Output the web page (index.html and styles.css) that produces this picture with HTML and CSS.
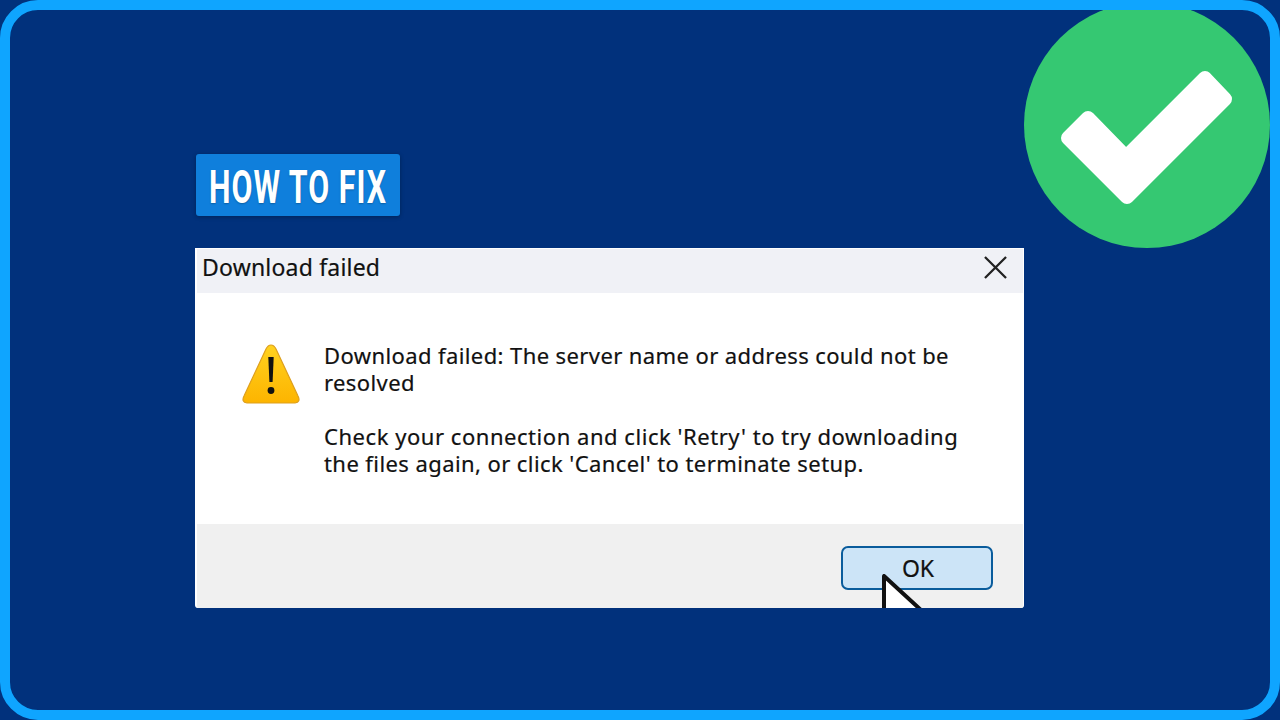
FILE: index.html
```html
<!DOCTYPE html>
<html lang="en">
<head>
  <meta charset="UTF-8" />
  <title>How to fix - Download failed</title>
  <link rel="stylesheet" href="styles.css">
</head>
<body>

  <div class="frame">
    <svg class="check" viewBox="1024 2 246 246" width="246" height="246">
      <circle cx="1147" cy="125" r="123" fill="#35c872" />
      <polygon points="1068,138 1088,118 1126,157 1205,78 1225,99 1127,197" fill="#fff" stroke="#fff" stroke-width="14" stroke-linejoin="round" />
    </svg>

    <div class="badge"><span class="badge-text">HOW TO FIX</span></div>

    <div class="dialog">
      <div class="titlebar">
        <span class="title">Download failed</span>
        <svg class="close" viewBox="0 0 24 24" width="24" height="24">
          <path d="M1 1 L23 23 M23 1 L1 23" stroke="#222" stroke-width="2.4" fill="none" />
        </svg>
      </div>

      <div class="content">
        <svg class="warn" viewBox="0 0 60 60" width="60" height="60">
          <defs>
            <linearGradient id="warnFill" x1="0" y1="0" x2="0" y2="1">
              <stop offset="0" stop-color="#ffd21f" />
              <stop offset="1" stop-color="#fdb400" />
            </linearGradient>
          </defs>
          <path d="M30 1 Q27 1 25 5 L3 52 Q0 58 6 59 L54 59 Q60 58 57 52 L35 5 Q33 1 30 1 Z" fill="url(#warnFill)" stroke="#dd9f1e" stroke-width="1.2" />
          <path d="M27.3 13 L32.7 13 L31.6 38 L28.4 38 Z" fill="#111" />
          <circle cx="30" cy="46.5" r="3.4" fill="#111" />
        </svg>
        <div class="message">
          <p>Download failed: The server name or address could not be<br>resolved</p>
          <p class="retry">Check your connection and click 'Retry' to try downloading<br><span class="retry-end">the files again, or click 'Cancel' to terminate setup.</span></p>
        </div>
      </div>

      <div class="footer">
        <button class="ok">OK</button>
      </div>

      <svg class="cursor" viewBox="0 0 60 60" width="60" height="60">
        <path d="M2 2 L2 58 L14 48 L52 48 Z" fill="#fff" stroke="#111" stroke-width="4" stroke-linejoin="round" />
      </svg>
    </div>
  </div>

</body>
</html>
```

FILE: styles.css
```css
* {
  box-sizing: border-box;
}

html, body {
  margin: 0;
  height: 100%;
  background: #01317c;
}

.frame {
  position: relative;
  width: 1280px;
  height: 720px;
  border: 10px solid #0fa5ff;
  border-radius: 38px;
  overflow: hidden;
  padding: 144px 0 0 185px;
  background: #01317c;
}

.check {
  position: absolute;
  left: 1014px;
  top: -8px;
}

.badge {
  display: flex;
  align-items: center;
  justify-content: center;
  width: 204px;
  height: 62px;
  margin-left: 1px;
  padding-top: 4px;
  background: #0f7fdc;
  border-radius: 3px;
  box-shadow: 0 1px 4px rgba(0, 0, 0, 0.3);
}

.badge-text {
  flex: none;
  color: #fff;
  font-family: Roboto, sans-serif;
  font-weight: bold;
  font-size: 46px;
  line-height: 58px;
  letter-spacing: 1.6px;
  white-space: nowrap;
  transform: scaleX(0.66);
  text-shadow: 0 1px 2px rgba(0, 0, 0, 0.25);
}

.dialog {
  position: relative;
  width: 829px;
  height: 360px;
  margin-top: 32px;
  display: flex;
  flex-direction: column;
  background: #fff;
  border-top: 1px solid #fff;
  border-left: 2px solid #fff;
  border-right: 1px solid #fff;
  border-radius: 0 0 3px 3px;
  overflow: hidden;
  font-family: "Noto Sans", sans-serif;
  color: #111;
  -webkit-text-stroke: 0.2px #111;
}

.titlebar {
  height: 44px;
  flex: none;
  display: flex;
  align-items: center;
  justify-content: space-between;
  padding: 0 16px 8px 5px;
  background: #f0f1f6;
}

.title {
  font-size: 23px;
  letter-spacing: 0.2px;
}

.close {
  width: 23px;
  height: 23px;
}

.content {
  flex: 1;
  display: flex;
  padding: 49px 0 0 44px;
}

.warn {
  flex: none;
  margin-top: 2px;
}

.message {
  margin-left: 23px;
  font-size: 22px;
  letter-spacing: 0.4px;
  line-height: 27px;
  white-space: nowrap;
}

.message p {
  margin: 0 0 27px;
}

.retry {
  letter-spacing: 0.54px;
}

.retry-end {
  letter-spacing: 0.42px;
}

.footer {
  height: 84px;
  flex: none;
  display: flex;
  justify-content: flex-end;
  padding: 22px 30px 0 0;
  background: #f0f0f0;
}

.ok {
  width: 152px;
  height: 44px;
  padding: 0 0 0 2px;
  background: #cce4f7;
  border: 2px solid #0a5c9c;
  border-radius: 7px;
  font-family: "Noto Sans", sans-serif;
  font-size: 23px;
  color: #111;
}

.cursor {
  position: absolute;
  left: 685px;
  top: 325px;
}
```
